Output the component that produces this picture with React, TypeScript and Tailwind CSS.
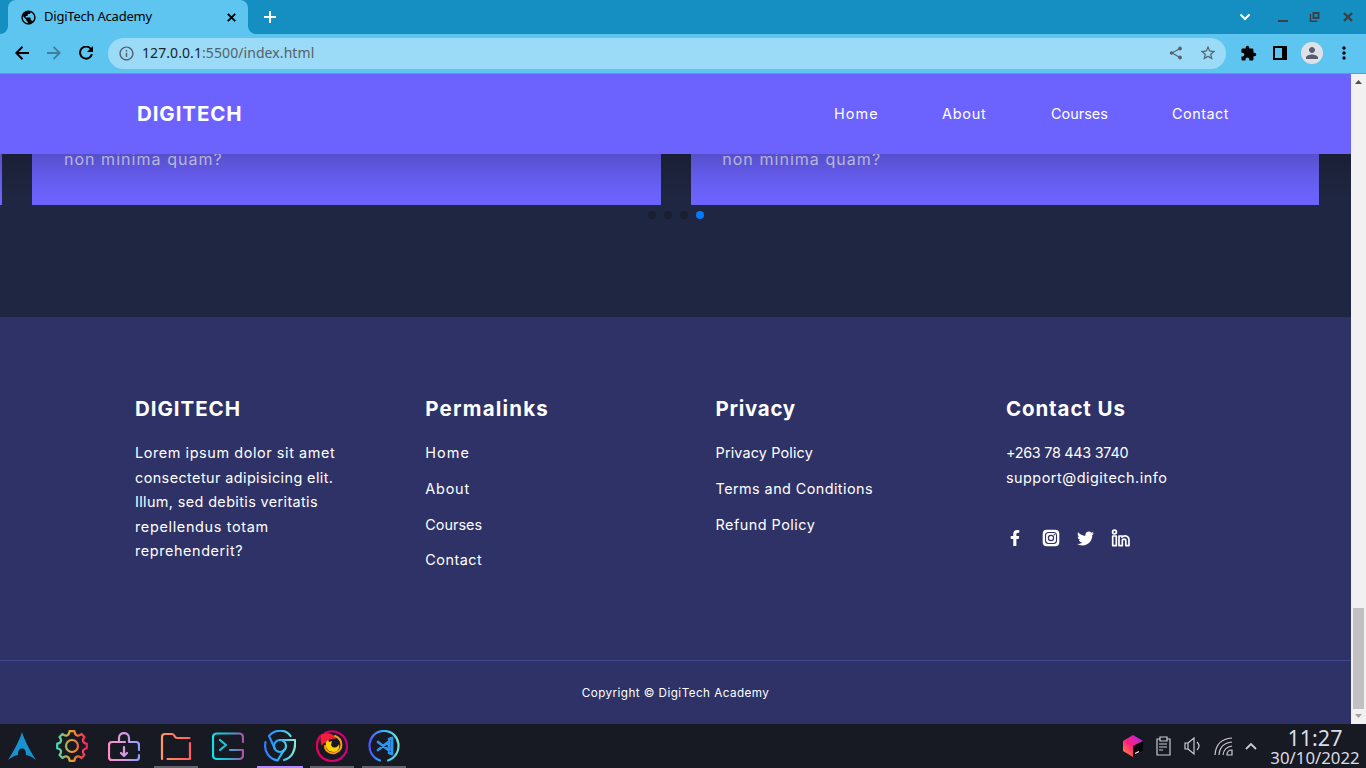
import React from "react";
import {
  MdPublic, MdInfoOutline, MdStarBorder, MdExtension, MdPerson, MdMoreVert,
} from "react-icons/md";
import { FaFacebookF, FaTwitter } from "react-icons/fa";

function TabStrip() {
  return (
    <div className="flex h-[34px] items-stretch bg-[#158fc2]">
      <div className="flex w-2 items-end bg-[#5ec5f1]">
        <div className="h-full w-full rounded-br-lg bg-[#158fc2]" />
      </div>
      <div className="flex w-[240px] items-center rounded-t-lg bg-[#5ec5f1] pl-3 pr-3 text-[13px] text-black">
        <MdPublic size={17} className="mr-[7px]" />
        <span className="grow tracking-[-0.22px]">DigiTech Academy</span>
        <svg width="9" height="9" viewBox="0 0 9 9"><path d="M.8 .8l7.400 7.400m0-7.400L.8 8.200" stroke="#000" strokeWidth="1.900" /></svg>
      </div>
      <div className="w-2 bg-[#5ec5f1]">
        <div className="h-full w-full rounded-bl-lg bg-[#158fc2]" />
      </div>
      <div className="flex items-center pl-2">
        <svg width="12" height="12" viewBox="0 0 12 12"><path d="M6 0v12M0 6h12" stroke="#fff" strokeWidth="2" /></svg>
      </div>
      <div className="grow" />
      <div className="flex items-center">
        <svg width="12" height="8" viewBox="0 0 12 8" className="mr-[26px]"><path d="M1.500 1.500L6 6l4.500-4.500" fill="none" stroke="#fff" strokeWidth="2" /></svg>
        <svg width="89" height="34" viewBox="0 0 89 34" fill="none" stroke="#3c4043" strokeWidth="2">
          <path d="M1 21h10M36.500 13h5v5h-5z" />
          <path d="M33.500 14v7.300h7" strokeWidth="1.500" />
          <path d="M67 13l8 8m0-8l-8 8" strokeWidth="2.400" />
        </svg>
      </div>
    </div>
  );
}

function Toolbar() {
  return (
    <div className="flex h-10 items-start border-b border-[#4aa3cf] bg-[#5ec5f1] pt-1">
      <div className="flex h-[30px] w-[108px] items-center pl-[15px] text-black">
        <svg width="14" height="14" viewBox="0 0 14 14" className="mr-[18px]" fill="none" stroke="#000" strokeWidth="2"><path d="M14 7H1.500M7.500 .8L1.300 7l6.200 6.200" /></svg>
        <svg width="14" height="14" viewBox="0 0 14 14" className="mr-[18px]" fill="none" stroke="#3d7f9c" strokeWidth="1.900"><path d="M0 7h12.500M6.500 .8L12.700 7l-6.200 6.200" /></svg>
        <svg width="14" height="14" viewBox="0 0 14 14"><path d="M12 3.200A6 6 0 1 0 12.900 8" fill="none" stroke="#000" strokeWidth="2" /><path d="M14 0v6H8z" /></svg>
      </div>
      <div className="flex h-[31px] w-[1118px] items-center rounded-full bg-[#9bdbf7] pb-px pl-[10px] pr-[9px] text-[#555f69]">
        <MdInfoOutline size={17} className="mr-[7px]" />
        <span className="grow pb-[2px] text-[14px] tracking-[0.08px]"><span className="text-[#17252c]">127.0.0.1</span>:5500/index.html</span>
        <svg width="14" height="14" viewBox="0 0 14 14" className="mr-4" fill="currentColor" stroke="currentColor">
          <path d="M11 2.500L3 7l8 4.500" fill="none" strokeWidth="1.100" />
          <circle cx="11" cy="2.500" r="1.500" /><circle cx="2.500" cy="7" r="1.300" /><circle cx="11" cy="11.500" r="1.500" />
        </svg>
        <MdStarBorder size={18} />
      </div>
      <div className="flex h-[30px] grow items-center pl-[13.500px] text-black">
        <MdExtension size={17} className="mr-4" />
        <svg width="14" height="14" viewBox="0 0 14 14" className="mr-[14px]"><path d="M1 1h12v12H1z" fill="none" stroke="#000" strokeWidth="2" /><path d="M9 0h5v14H9z" /></svg>
        <div className="mr-[11px] flex size-[22px] items-center justify-center rounded-full bg-[#dee1e6] text-[#555d73]"><MdPerson size={18} /></div>
        <MdMoreVert size={20} />
      </div>
    </div>
  );
}

function CourseCard({ text }: { text: string }) {
  return (
    <div className="h-[51px] w-[628.300px] shrink-0 bg-[#6c63ff] pl-[31.500px]">
      <p className="-mt-2 text-[16px] leading-[27px] tracking-[1.050px] text-white/75">{text}</p>
    </div>
  );
}

function Courses() {
  return (
    <section className="relative h-[163px] bg-[#1f2641]">
      <div className="flex gap-[30px] overflow-hidden">
        <div className="h-[51px] w-[2.400px] shrink-0 bg-[#6c63ff]" />
        <CourseCard text="non minima quam?" />
        <CourseCard text="non minima quam?" />
      </div>
      <div className="flex justify-center gap-2 pt-[6px]">
        <i className="size-2 rounded-full bg-[#191e34]" />
        <i className="size-2 rounded-full bg-[#191e34]" />
        <i className="size-2 rounded-full bg-[#191e34]" />
        <i className="size-2 rounded-full bg-[#007aff]" />
      </div>
      <div className="absolute inset-x-0 top-0 h-[46px] bg-linear-to-b from-black/20 via-black/8 to-transparent" />
    </section>
  );
}

function Navbar() {
  return (
    <nav className="flex h-20 items-center bg-[#6c63ff] pl-[137px] text-white">
      <h4 className="w-[697px] text-[20.5px] font-bold tracking-[0.9px]">DIGITECH</h4>
      <ul className="flex text-[14.400px]">
        <li className="w-[108px] tracking-[1.100px]">Home</li>
        <li className="w-[109px] tracking-[0.8px]">About</li>
        <li className="w-[121px] tracking-[0.03px]">Courses</li>
        <li className="tracking-[0.5px]">Contact</li>
      </ul>
    </nav>
  );
}

function Title({ children, className }: { children: React.ReactNode; className: string }) {
  return <h4 className={`mb-[19px] text-[20.5px] leading-[26px] font-bold ${className}`}>{children}</h4>;
}

function LinkList({ items }: { items: [string, string][] }) {
  return <ul className="flex flex-col gap-[11.300px]">{items.map(([t, c]) => <li key={t} className={c}>{t}</li>)}</ul>;
}

function Footer() {
  return (
    <footer className="h-[407px] bg-[#2e3267] pt-[79px] text-[14.400px] leading-[24.500px] text-white">
      <div className="grid h-[264px] grid-cols-[290.300px_290.300px_290.300px_220px] pl-[135px]">
        <div>
          <Title className="tracking-[0.95px]">DIGITECH</Title>
          <p>
            <span className="tracking-[0.6px]">Lorem ipsum dolor sit amet</span><br />
            <span className="tracking-[0.42px]">consectetur adipisicing elit.</span><br />
            <span className="tracking-[0.38px]">Illum, sed debitis veritatis</span><br />
            <span className="tracking-[0.68px]">repellendus totam</span><br />
            <span className="tracking-[0.6px]">reprehenderit?</span>
          </p>
        </div>
        <div>
          <Title className="tracking-[1.200px]">Permalinks</Title>
          <LinkList items={[["Home", "tracking-[1.100px]"], ["About", "tracking-[0.8px]"], ["Courses", "tracking-[0.03px]"], ["Contact", "tracking-[0.5px]"]]} />
        </div>
        <div>
          <Title className="tracking-[0.7px]">Privacy</Title>
          <LinkList items={[["Privacy Policy", "tracking-[0.15px]"], ["Terms and Conditions", "tracking-[0.43px]"], ["Refund Policy", "tracking-[0.48px]"]]} />
        </div>
        <div>
          <Title className="tracking-[0.9px]">Contact Us</Title>
          <p className="tracking-[-0.27px]">+263 78 443 3740</p>
          <p className="tracking-[0.52px]">support@digitech.info</p>
          <div className="mt-[39px] flex items-center">
            <FaFacebookF size={16} className="mr-[18px] ml-px" />
            <svg width="18" height="18" viewBox="0 0 18 18" className="mr-[17px] ml-px">
              <rect x=".7" y=".7" width="16.600" height="16.600" rx="4" fill="#fff" />
              <rect x="3.500" y="3.500" width="11" height="11" rx="3" fill="none" stroke="#2e3267" strokeWidth="1.100" />
              <circle cx="9" cy="9" r="2.600" fill="none" stroke="#2e3267" strokeWidth="1.200" />
              <circle cx="12.200" cy="5.800" r=".7" fill="#2e3267" />
            </svg>
            <FaTwitter size={17} className="mr-[17px]" />
            <svg width="20" height="18" viewBox="0 0 20 18" fill="none" stroke="#fff" strokeWidth="1.700" strokeLinejoin="round">
              <circle cx="3.500" cy="3" r="1.900" /><path d="M1.700 7h3.600v9.600H1.700zM8 7h3v1.300c2-2.200 7-1.800 7 2.800v5.500h-3.200v-4.800c0-2.300-3.500-2.300-3.500 0v4.800H8z" />
            </svg>
          </div>
        </div>
      </div>
      <div className="flex h-16 items-center justify-center border-t border-[#424890] pt-px">
        <small className="text-[11.700px] tracking-[0.44px]">Copyright © DigiTech Academy</small>
      </div>
    </footer>
  );
}

function Scrollbar() {
  return (
    <div className="flex w-[15px] flex-col items-center bg-[#f1f1f1]">
      <svg width="7" height="4" viewBox="0 0 7 4" className="mt-[6px]"><path d="M0 4L3.500 0 7 4z" fill="#505050" /></svg>
      <div className="mt-[524px] h-[101px] w-[11px] bg-[#c1c1c1]" />
      <svg width="7" height="4" viewBox="0 0 7 4" className="mt-[5px]"><path d="M0 0h7L3.500 4z" fill="#a0a0a0" /></svg>
    </div>
  );
}

function Gradient({ id, stops }: { id: string; stops: string[] }) {
  return (
    <linearGradient id={id} x1="0" y1="0" x2="32" y2="0" gradientUnits="userSpaceOnUse">
      {stops.map((c, i) => <stop key={c} offset={i / (stops.length - 1)} stopColor={c} />)}
    </linearGradient>
  );
}

function Launcher({ id, stops, line = "w-11 bg-transparent", children }: { id: string; stops: string[]; line?: string; children: React.ReactNode }) {
  return (
    <div className="flex w-[52px] flex-col items-center">
      <svg width="32" height="32" viewBox="0 0 32 32" fill="none" stroke={`url(#${id})`} strokeWidth="2.200" strokeLinecap="round" strokeLinejoin="round" className="mt-[6px]">
        <defs><Gradient id={id} stops={stops} /></defs>
        {children}
      </svg>
      <div className={`mt-1 h-[2px] ${line}`} />
    </div>
  );
}

function Taskbar() {
  return (
    <div className="flex h-11 bg-[#171923] text-[#dcdce2]">
      <div className="w-[46px] pt-2 pl-2">
        <svg width="28" height="28" viewBox="0 0 28 28"><path d="M14 0c-2 7-7 17-14 28 4-3 7-4.500 10-5 0-4 1-6.500 4-6.500s4 2.500 4 6.500c3 .5 6 2 10 5C21 17 16 7 14 0z" fill="#1793d1" /></svg>
      </div>
      <Launcher id="gear" stops={["#31e0c3", "#f39b28", "#f51666"]}>
        <circle cx="16" cy="16" r="6" />
        <path d="M13.500 1.200h5q.2 3.500 2.500 4.300 2 .7 4.500-1.500l3 3q-2.200 2.500-1.300 4.500t3.600 2v5q-2.700 0-3.600 2t1.300 4.500l-3 3q-2.500-2.200-4.500-1.500-2.300.8-2.500 4.300h-5q-.2-3.500-2.500-4.300-2-.7-4.500 1.500l-3-3q2.200-2.500 1.300-4.500t-3.600-2v-5q2.700 0 3.600-2T3.500 7l3-3Q9 6.200 11 5.500q2.300-.8 2.500-4.300z" />
      </Launcher>
      <Launcher id="store" stops={["#ff8fc5", "#d99add", "#8d9cff"]}>
        <path d="M11 12H4q-3 0-3 3v12q0 3 3 3h24q3 0 3-3v-2M31 20v-5q0-3-3-3h-6M11 12V8c0-6.500 10-6.500 10 0v4M11 12h6m-1 5v9m-3-3l3 3 3-3" />
      </Launcher>
      <Launcher id="folder" stops={["#ff9966", "#ff5964"]} line="w-11 bg-[#62636f]">
        <path d="M2 29V7q0-3 3-3h7q1.500 0 2.500 2t2.500 2h12.500M7.500 29H30V13" />
      </Launcher>
      <Launcher id="terminal" stops={["#10e3ee", "#22b9d0", "#b34da5"]}>
        <path d="M31 12V7.500q0-4-4-4H5q-4 0-4 4v17.500q0 4 4 4h22q4 0 4-4v-5H18M8 10l6 5-6 5" />
      </Launcher>
      <Launcher id="chrome" stops={["#3475ff", "#28b6f8", "#89efcc"]} line="w-[46px] bg-[#b58aff]">
        <circle cx="16" cy="16" r="6" />
        <path d="M5 6c6-7 17-7 21.500 0M5 6l6 13M1.500 12c-2 10 4 17 12 18.500L20 20M16 10h15c1 10-3 18-11 20" />
      </Launcher>
      <Launcher id="firefox" stops={["#e9005f", "#c8007c"]} line="w-11 bg-[#62636f]">
        <path d="M9 3c10-5 22 2 22 13 0 9-7 15-15 15S1 25 1 16C1 11 3 7 6 5" />
        <path d="M6 4c7-2 12 0 14 5-5-1-8 0-8 4-4-1-5 0-6 3-2-4-2-9 0-12z" fill="#f0203a" stroke="none" />
        <path d="M19 6c8 3 9 14 0 17-5 1-10-2-10-7" stroke="#ff9a16" strokeWidth="2" />
        <path d="M10 12l2-2 1 2 3-1-1 4c2 4 7 3 8-1 1 4-1 8-5 8-6 0-9-4-8-10z" fill="#ffd000" stroke="none" />
      </Launcher>
      <Launcher id="code" stops={["#534bff", "#29b9fb", "#7eeacb"]} line="w-11 bg-[#62636f]">
        <path d="M12 30.500C-4 25-1 1 16 1s20 24 4 29.500" />
        <path d="M10 12l11 8.500V11.500L10 20m11-11l3-1v16l-3-1" strokeWidth="2.800" stroke="#2b94ee" />
      </Launcher>
      <div className="grow" />
      <svg width="140" height="44" viewBox="0 0 140 44" fill="none" stroke="#cacbd3" strokeWidth="1.200">
        <defs><linearGradient id="cube" x1="0" x2="1" y1="1" y2="0"><stop stopColor="#ff9a30" /><stop offset=".45" stopColor="#ff217c" /><stop offset="1" stopColor="#a12bf0" /></linearGradient></defs>
        <path d="M13 11l10 6v10l-10 6-10-6V17z" fill="url(#cube)" stroke="none" /><path d="M13 22l10-5v10l-10 6z" fill="#050507" stroke="none" /><path d="M15 29.500l4-2" stroke="#fff" />
        <path d="M40 15h-3v16h13V15h-3M40 13h7v4h-7zM39 20h8m-8 3h8m-8 3h4" />
        <path d="M65 19h3v6h-3zM68 19l6-5v16l-6-5M77 18q4 4 0 8" />
        <path d="M95 31q1-16 17-17M99 31q1-12 13-13M103 31q1-8 9-9M107 31q0-5 5-5v5z" />
        <path d="M126 25l5-5 5 5" strokeWidth="1.800" />
      </svg>
      <div className="ml-[4px] flex w-[102px] flex-col items-center pt-[3px]">
        <span className="text-[21.500px] leading-[22px]">11:27</span>
        <span className="text-[16.800px] leading-[17px]">30/10/2022</span>
      </div>
    </div>
  );
}

export default function App() {
  return (
    <div className="flex h-[768px] w-[1366px] flex-col overflow-hidden font-['Noto_Sans',sans-serif]">
      <TabStrip />
      <Toolbar />
      <div className="flex h-[650px]">
        <main className="w-[1351px] overflow-hidden font-['Inter',sans-serif]">
          <Navbar />
          <Courses />
          <Footer />
        </main>
        <Scrollbar />
      </div>
      <Taskbar />
    </div>
  );
}
